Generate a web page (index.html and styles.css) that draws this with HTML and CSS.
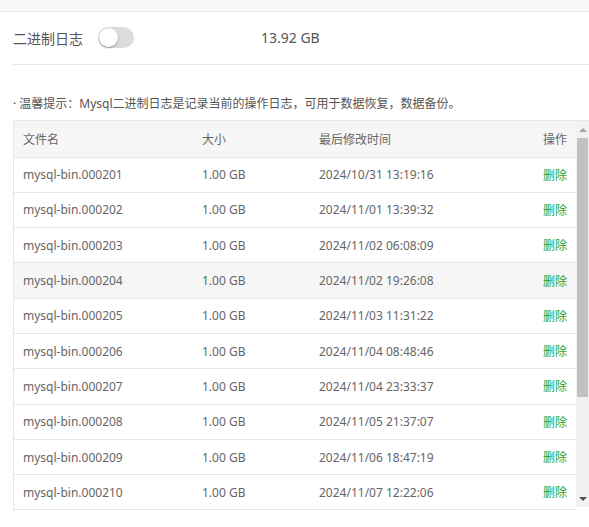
FILE: index.html
```html
<!DOCTYPE html>
<html>
<head>
    <meta charset="UTF-8">
    <link rel="stylesheet" href="styles.css">
</head>
<body>
    <div class="topbar"></div>
    <div class="content">
        <div class="binlog-row">
            <span class="binlog-label">二进制日志</span>
            <label class="switch">
                <input type="checkbox" id="binlogToggle">
                <span class="slider"></span>
            </label>
            <span class="binlog-size">13.92 GB</span>
        </div>

        <p class="tips">· 温馨提示：Mysql二进制日志是记录当前的操作日志，可用于数据恢复，数据备份。</p>

        <div class="table-box">
            <div class="table-scroll">
                <table class="log-table">
                    <thead>
                        <tr>
                            <th class="col-name">文件名</th>
                            <th class="col-size">大小</th>
                            <th class="col-time">最后修改时间</th>
                            <th class="col-op">操作</th>
                        </tr>
                    </thead>
                    <tbody>
                        <tr><td>mysql-bin.000201</td><td>1.00 GB</td><td>2024/10/31 13:19:16</td><td class="col-op"><a class="btlink">删除</a></td></tr>
                        <tr><td>mysql-bin.000202</td><td>1.00 GB</td><td>2024/11/01 13:39:32</td><td class="col-op"><a class="btlink">删除</a></td></tr>
                        <tr><td>mysql-bin.000203</td><td>1.00 GB</td><td>2024/11/02 06:08:09</td><td class="col-op"><a class="btlink">删除</a></td></tr>
                        <tr class="hover"><td>mysql-bin.000204</td><td>1.00 GB</td><td>2024/11/02 19:26:08</td><td class="col-op"><a class="btlink">删除</a></td></tr>
                        <tr><td>mysql-bin.000205</td><td>1.00 GB</td><td>2024/11/03 11:31:22</td><td class="col-op"><a class="btlink">删除</a></td></tr>
                        <tr><td>mysql-bin.000206</td><td>1.00 GB</td><td>2024/11/04 08:48:46</td><td class="col-op"><a class="btlink">删除</a></td></tr>
                        <tr><td>mysql-bin.000207</td><td>1.00 GB</td><td>2024/11/04 23:33:37</td><td class="col-op"><a class="btlink">删除</a></td></tr>
                        <tr><td>mysql-bin.000208</td><td>1.00 GB</td><td>2024/11/05 21:37:07</td><td class="col-op"><a class="btlink">删除</a></td></tr>
                        <tr><td>mysql-bin.000209</td><td>1.00 GB</td><td>2024/11/06 18:47:19</td><td class="col-op"><a class="btlink">删除</a></td></tr>
                        <tr><td>mysql-bin.000210</td><td>1.00 GB</td><td>2024/11/07 12:22:06</td><td class="col-op"><a class="btlink">删除</a></td></tr>
                    </tbody>
                </table>
            </div>
            <div class="scrollbar">
                <span class="scroll-btn up"></span>
                <div class="scroll-track">
                    <div class="scroll-thumb"></div>
                </div>
                <span class="scroll-btn down"></span>
            </div>
        </div>
    </div>
</body>
</html>
```

FILE: styles.css
```css
* {
    box-sizing: border-box;
}

body {
    margin: 0;
    background: #fff;
    color: #666;
    font-family: "Noto Sans", "Noto Sans CJK SC", sans-serif;
    font-size: 12px;
    overflow: hidden;
}

.topbar {
    height: 12px;
    background: #f8f8f8;
    border-bottom: 1px solid #e8e8e8;
}

.content {
    padding-left: 13px;
}

.binlog-row {
    display: flex;
    align-items: center;
    height: 53px;
    padding-bottom: 1px;
    border-bottom: 1px solid #e6e6e6;
}

.binlog-label {
    font-size: 14px;
    color: #555;
    margin-right: 15px;
}

.binlog-size {
    font-size: 14px;
    color: #555;
    margin-left: 127px;
}

.switch {
    position: relative;
    width: 36px;
    height: 21px;
}

.switch input {
    opacity: 0;
    width: 0;
    height: 0;
}

.slider {
    position: absolute;
    top: 0;
    left: 0;
    right: 0;
    bottom: 0;
    background-color: #dcdcdc;
    border-radius: 21px;
    cursor: pointer;
}

.slider:before {
    position: absolute;
    content: "";
    width: 19px;
    height: 19px;
    left: 1px;
    top: 1px;
    background: #fff;
    border-radius: 50%;
    box-shadow: 0 1px 2px rgba(0, 0, 0, 0.35);
}

.tips {
    margin: 31px 0 8px 0;
    font-size: 12px;
    line-height: 16px;
    color: #555;
}

.table-box {
    display: flex;
    height: 391px;
}

.table-scroll {
    flex: 1;
    overflow: hidden;
    border-top: 1px solid #e6e6e6;
    border-left: 1px solid #e6e6e6;
}

.log-table {
    width: 100%;
    border-collapse: collapse;
    table-layout: fixed;
}

.log-table th,
.log-table td {
    padding: 0 9px;
    text-align: left;
    font-weight: normal;
    border-bottom: 1px solid #e6e6e6;
    white-space: nowrap;
}

.log-table thead tr {
    height: 36px;
    background: #f6f6f6;
}

.log-table tbody tr {
    height: 35.3px;
}

.log-table tr.hover {
    background: #f6f6f6;
}

.col-name {
    width: 179px;
}

.col-size {
    width: 117px;
}

.col-op {
    width: 80px;
}

.log-table .col-op {
    text-align: right;
}

.btlink {
    color: #20a53a;
    cursor: pointer;
}

/* drawn scrollbar */
.scrollbar {
    width: 13px;
    display: flex;
    flex-direction: column;
    background: #f1f1f1;
    border-top: 1px solid #e6e6e6;
    margin-bottom: 4px;
}

.scroll-btn {
    height: 17px;
    display: flex;
    align-items: center;
    justify-content: center;
}

.scroll-btn:before {
    content: "";
    border-left: 4px solid transparent;
    border-right: 4px solid transparent;
}

.scroll-btn.up:before {
    border-bottom: 4px solid #a3a3a3;
}

.scroll-btn.down:before {
    border-top: 4px solid #505050;
}

.scroll-track {
    flex: 1;
}

.scroll-thumb {
    height: 259px;
    margin: 0 1px;
    background: #c1c1c1;
}
```
